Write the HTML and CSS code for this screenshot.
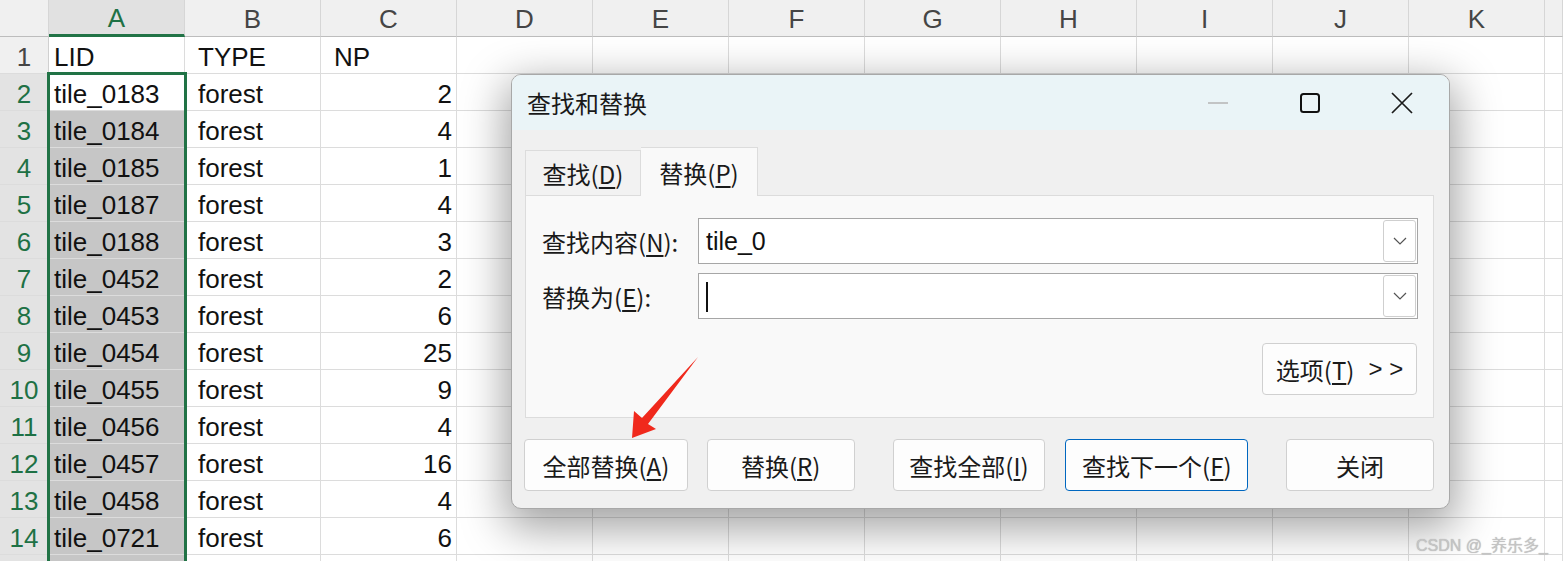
FILE: index.html
```html
<!DOCTYPE html>
<html lang="zh-CN">
<head>
<meta charset="utf-8">
<title>查找和替换</title>
<link rel="stylesheet" href="styles.css">
</head>
<body>
<div class="sheet">
  <div class="corner"></div><div class="ch cha">A</div><div class="ch">B</div><div class="ch">C</div><div class="ch">D</div><div class="ch">E</div><div class="ch">F</div><div class="ch">G</div><div class="ch">H</div><div class="ch">I</div><div class="ch">J</div><div class="ch">K</div><div class="ch"></div>

  <div class="rh">1</div><div class="c ca">LID</div><div class="c cb">TYPE</div><div class="c cb">NP</div><div class="c"></div><div class="c"></div><div class="c"></div><div class="c"></div><div class="c"></div><div class="c"></div><div class="c"></div><div class="c"></div><div class="c"></div>

  <div class="rh sel">2</div><div class="c ca">tile_0183</div><div class="c cb">forest</div><div class="c cn">2</div><div class="c"></div><div class="c"></div><div class="c"></div><div class="c"></div><div class="c"></div><div class="c"></div><div class="c"></div><div class="c"></div><div class="c"></div>

  <div class="rh sel">3</div><div class="c ca grey">tile_0184</div><div class="c cb">forest</div><div class="c cn">4</div><div class="c"></div><div class="c"></div><div class="c"></div><div class="c"></div><div class="c"></div><div class="c"></div><div class="c"></div><div class="c"></div><div class="c"></div>

  <div class="rh sel">4</div><div class="c ca grey">tile_0185</div><div class="c cb">forest</div><div class="c cn">1</div><div class="c"></div><div class="c"></div><div class="c"></div><div class="c"></div><div class="c"></div><div class="c"></div><div class="c"></div><div class="c"></div><div class="c"></div>

  <div class="rh sel">5</div><div class="c ca grey">tile_0187</div><div class="c cb">forest</div><div class="c cn">4</div><div class="c"></div><div class="c"></div><div class="c"></div><div class="c"></div><div class="c"></div><div class="c"></div><div class="c"></div><div class="c"></div><div class="c"></div>

  <div class="rh sel">6</div><div class="c ca grey">tile_0188</div><div class="c cb">forest</div><div class="c cn">3</div><div class="c"></div><div class="c"></div><div class="c"></div><div class="c"></div><div class="c"></div><div class="c"></div><div class="c"></div><div class="c"></div><div class="c"></div>

  <div class="rh sel">7</div><div class="c ca grey">tile_0452</div><div class="c cb">forest</div><div class="c cn">2</div><div class="c"></div><div class="c"></div><div class="c"></div><div class="c"></div><div class="c"></div><div class="c"></div><div class="c"></div><div class="c"></div><div class="c"></div>

  <div class="rh sel">8</div><div class="c ca grey">tile_0453</div><div class="c cb">forest</div><div class="c cn">6</div><div class="c"></div><div class="c"></div><div class="c"></div><div class="c"></div><div class="c"></div><div class="c"></div><div class="c"></div><div class="c"></div><div class="c"></div>

  <div class="rh sel">9</div><div class="c ca grey">tile_0454</div><div class="c cb">forest</div><div class="c cn">25</div><div class="c"></div><div class="c"></div><div class="c"></div><div class="c"></div><div class="c"></div><div class="c"></div><div class="c"></div><div class="c"></div><div class="c"></div>

  <div class="rh sel">10</div><div class="c ca grey">tile_0455</div><div class="c cb">forest</div><div class="c cn">9</div><div class="c"></div><div class="c"></div><div class="c"></div><div class="c"></div><div class="c"></div><div class="c"></div><div class="c"></div><div class="c"></div><div class="c"></div>

  <div class="rh sel">11</div><div class="c ca grey">tile_0456</div><div class="c cb">forest</div><div class="c cn">4</div><div class="c"></div><div class="c"></div><div class="c"></div><div class="c"></div><div class="c"></div><div class="c"></div><div class="c"></div><div class="c"></div><div class="c"></div>

  <div class="rh sel">12</div><div class="c ca grey">tile_0457</div><div class="c cb">forest</div><div class="c cn">16</div><div class="c"></div><div class="c"></div><div class="c"></div><div class="c"></div><div class="c"></div><div class="c"></div><div class="c"></div><div class="c"></div><div class="c"></div>

  <div class="rh sel">13</div><div class="c ca grey">tile_0458</div><div class="c cb">forest</div><div class="c cn">4</div><div class="c"></div><div class="c"></div><div class="c"></div><div class="c"></div><div class="c"></div><div class="c"></div><div class="c"></div><div class="c"></div><div class="c"></div>

  <div class="rh sel">14</div><div class="c ca grey">tile_0721</div><div class="c cb">forest</div><div class="c cn">6</div><div class="c"></div><div class="c"></div><div class="c"></div><div class="c"></div><div class="c"></div><div class="c"></div><div class="c"></div><div class="c"></div><div class="c"></div>

  <div class="rh sel"></div><div class="c ca grey"></div><div class="c cb"></div><div class="c cn"></div><div class="c"></div><div class="c"></div><div class="c"></div><div class="c"></div><div class="c"></div><div class="c"></div><div class="c"></div><div class="c"></div><div class="c"></div>
</div>

<div class="selection"></div>

<div class="dlg">
  <div class="titlebar">
    <span class="title">查找和替换</span>
    <div class="ctrls">
      <div class="ctl"><svg width="22" height="4" viewBox="0 0 22 4"><line x1="1" y1="2" x2="21" y2="2" stroke="#b4b4b4" stroke-width="1.6"/></svg></div>
      <div class="ctl"><svg width="22" height="22" viewBox="0 0 22 22"><rect x="2" y="2" width="18" height="18" rx="2.5" fill="none" stroke="#111" stroke-width="2"/></svg></div>
      <div class="ctl"><svg width="22" height="22" viewBox="0 0 22 22"><path d="M1 1 L21 21 M21 1 L1 21" stroke="#1a1a1a" stroke-width="1.7" fill="none"/></svg></div>
    </div>
  </div>
  <div class="dbody">
    <div class="tabs">
      <div class="tab">查找(<u>D</u>)</div>
      <div class="tab on">替换(<u>P</u>)</div>
    </div>
    <div class="panel">
      <div class="frow">
        <span class="lbl">查找内容(<u>N</u>):</span>
        <div class="combo"><span class="val">tile_0</span><span class="dd"><svg width="14" height="8" viewBox="0 0 14 8"><path d="M1 1 L7 7 L13 1" fill="none" stroke="#555" stroke-width="1.2"/></svg></span></div>
      </div>
      <div class="frow">
        <span class="lbl">替换为(<u>E</u>):</span>
        <div class="combo"><span class="val"><span class="caret"></span></span><span class="dd"><svg width="14" height="8" viewBox="0 0 14 8"><path d="M1 1 L7 7 L13 1" fill="none" stroke="#555" stroke-width="1.2"/></svg></span></div>
      </div>
      <div class="optrow">
        <button class="btn opt">选项(<u>T</u>)<span class="gg">&gt; &gt;</span></button>
      </div>
    </div>
    <div class="btnrow">
      <button class="btn b1">全部替换(<u>A</u>)</button>
      <button class="btn b2">替换(<u>R</u>)</button>
      <button class="btn b3">查找全部(<u>I</u>)</button>
      <button class="btn b4 pri">查找下一个(<u>F</u>)</button>
      <button class="btn b5">关闭</button>
    </div>
  </div>
</div>

<svg class="anno" width="1563" height="561" viewBox="0 0 1563 561">
  <polygon points="698,357 648,424 656,429 632,438 634,411 642,418" fill="#f0291c"/>
</svg>

<div class="wm">CSDN @_养乐多_</div>
</body>
</html>
```

FILE: styles.css
```css
html, body {
  margin: 0;
  padding: 0;
}
body {
  width: 1563px;
  height: 561px;
  overflow: hidden;
  position: relative;
  background: #ffffff;
  font-family: "Liberation Sans", Arial, sans-serif;
}

/* ---------- spreadsheet ---------- */
.sheet {
  display: grid;
  grid-template-columns: 49px repeat(11, 136px) 1fr;
  grid-auto-rows: 37px;
  height: 561px;
  overflow: hidden;
  font-size: 26px;
  color: #111;
}
.sheet > div {
  box-sizing: border-box;
  border-right: 1px solid #dcdcdc;
  border-bottom: 1px solid #dcdcdc;
  display: flex;
  align-items: center;
  padding-top: 4px;
  white-space: nowrap;
  overflow: hidden;
}
.corner {
  background: #f0f0f0;
}
.sheet > .corner,
.sheet > .ch {
  border-bottom: 1px solid #bdbdbd;
  border-right: 1px solid #d6d6d6;
}
.ch {
  background: #f0f0f0;
  justify-content: center;
  color: #454545;
  padding-top: 2px !important;
}
.sheet > .cha {
  background: #e1e1e1;
  color: #1e7145;
  border-bottom: 3px solid #217346;
}
.rh {
  background: #f0f0f0;
  justify-content: center;
  color: #454545;
}
.sheet > .rh {
  border-right: 1px solid #d0d0d0;
}
.rh.sel {
  background: #e3e3e3;
  color: #1e7145;
}
.ca {
  padding-left: 5px;
}
.cb {
  padding-left: 13px;
}
.cn {
  justify-content: flex-end;
  padding-right: 4px;
}
.grey {
  background: #c6c6c6;
}
.selection {
  position: absolute;
  left: 47px;
  top: 72px;
  width: 140px;
  height: 489px;
  box-sizing: border-box;
  border: 3px solid #217346;
  border-bottom: none;
  pointer-events: none;
}

/* ---------- dialog ---------- */
.dlg {
  position: absolute;
  left: 511px;
  top: 74px;
  width: 939px;
  height: 435px;
  box-sizing: border-box;
  border: 1px solid #a8a8a8;
  border-radius: 10px;
  background: #f0f0f0;
  box-shadow: 0 14px 44px 6px rgba(0, 0, 0, 0.36);
  overflow: hidden;
  font-family: "Noto Sans CJK SC", "Liberation Sans", sans-serif;
  color: #1a1a1a;
}
.titlebar {
  height: 55px;
  background: #eaf4f7;
  display: flex;
  align-items: center;
  padding-left: 15px;
}
.title {
  font-size: 24px;
}
.ctrls {
  margin-left: auto;
  display: flex;
  height: 100%;
  margin-right: 1px;
}
.ctl {
  width: 92px;
  display: flex;
  align-items: center;
  justify-content: center;
}
.dbody {
  padding: 17px 15px 0 13px;
}
.tabs {
  display: flex;
  align-items: flex-end;
  height: 48px;
}
.tab {
  width: 116px;
  height: 45px;
  box-sizing: border-box;
  border: 1px solid #dcdcdc;
  border-bottom: none;
  background: #f2f2f2;
  display: flex;
  align-items: center;
  justify-content: center;
  font-size: 24px;
}
.tab.on {
  width: 117px;
  height: 49px;
  margin-bottom: -1px;
  border-left: none;
  background: #f9f9f9;
  position: relative;
  z-index: 1;
}
u {
  text-decoration: underline;
  text-decoration-thickness: 1.5px;
  text-underline-offset: 3px;
}
.panel {
  height: 223px;
  box-sizing: border-box;
  border: 1px solid #dcdcdc;
  background: #f9f9f9;
  padding: 22px 15px 0 16px;
}
.frow {
  display: flex;
  align-items: center;
  height: 46px;
}
.frow + .frow {
  margin-top: 9px;
}
.lbl {
  width: 156px;
  flex: none;
  font-size: 24px;
}
.combo {
  flex: 1;
  height: 46px;
  box-sizing: border-box;
  border: 1px solid #a6a6a6;
  background: #ffffff;
  display: flex;
  align-items: center;
  padding-left: 7px;
  padding-right: 1px;
}
.val {
  flex: 1;
  font-family: "Liberation Sans", Arial, sans-serif;
  font-size: 25px;
  color: #111;
  display: flex;
  align-items: center;
}
.caret {
  display: block;
  width: 1.5px;
  height: 30px;
  background: #111;
  margin-top: 1px;
}
.dd {
  width: 33px;
  height: 42px;
  box-sizing: border-box;
  border: 1px solid #cfcfcf;
  border-radius: 3px;
  display: flex;
  align-items: center;
  justify-content: center;
}
.optrow {
  display: flex;
  justify-content: flex-end;
  margin-top: 24px;
  padding-right: 1px;
}
.btn {
  height: 52px;
  box-sizing: border-box;
  border: 1px solid #d0d0d0;
  border-radius: 4px;
  background: #fdfdfd;
  font-family: "Noto Sans CJK SC", "Liberation Sans", sans-serif;
  font-size: 24px;
  color: #1a1a1a;
  display: flex;
  align-items: center;
  justify-content: center;
  padding: 0;
  margin: 0;
}
.opt {
  width: 155px;
}
.gg {
  margin-left: 14px;
  font-family: "Liberation Sans", Arial, sans-serif;
  font-size: 24px;
}
.btnrow {
  display: flex;
  margin-top: 21px;
}
.b1 { width: 164px; margin-left: -1px; }
.b2 { width: 148px; margin-left: 19px; }
.b3 { width: 153px; margin-left: 38px; }
.b4 { width: 183px; margin-left: 20px; }
.b5 { width: 148px; margin-left: 38px; }
.btn.pri {
  border-color: #0067c0;
}

/* ---------- annotations ---------- */
.anno {
  position: absolute;
  left: 0;
  top: 0;
  pointer-events: none;
}
.wm {
  position: absolute;
  left: 1416px;
  top: 532px;
  font-size: 16px;
  color: #c4c4c4;
  text-shadow: 0 0 1px rgba(90, 90, 90, 0.45);
  white-space: nowrap;
}
```
